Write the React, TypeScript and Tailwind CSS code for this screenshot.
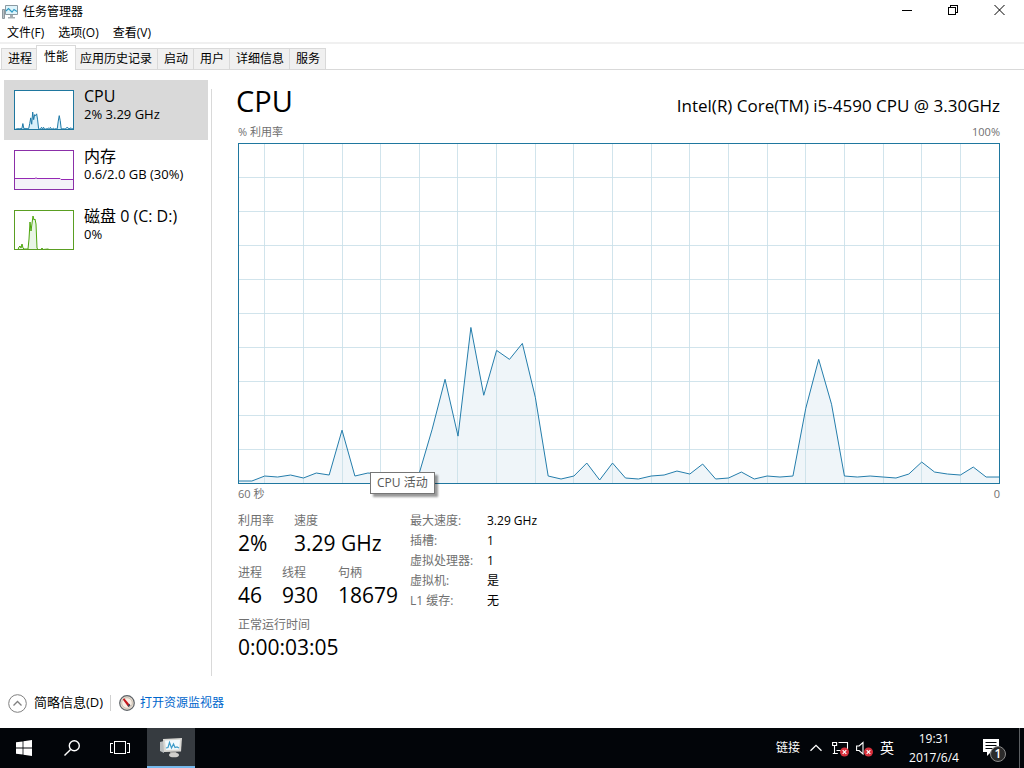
import React, { useState } from 'react';

const tabs = ['进程', '性能', '应用历史记录', '启动', '用户', '详细信息', '服务'];

// height above the baseline for every sample, out of 340
const cpuSamples = [
  2, 2, 7, 6, 8, 5, 10, 8, 53, 7, 10, 9, 9, 8, 10, 54, 104, 47, 156, 88,
  133, 124, 140, 86, 7, 4, 7, 20, 3, 20, 5, 4, 7, 8, 12, 9, 19, 4, 5, 11,
  4, 7, 6, 7, 75, 124, 79, 7, 6, 7, 6, 5, 9, 21, 11, 9, 8, 16, 6, 6,
];

const CHART_W = 762;
const CHART_H = 340;
const STEP = CHART_W / (cpuSamples.length - 1);

const cpuLine = cpuSamples
  .map((value, i) => `${(i * STEP).toFixed(1)},${CHART_H - value}`)
  .join(' ');

const CpuChart: React.FC = () => (
  <svg
    className="block w-full h-[200px] grow border border-[#1f779f] bg-white"
    viewBox={`0 0 ${CHART_W} ${CHART_H}`}
    preserveAspectRatio="none"
    role="img"
    aria-label="CPU 活动"
  >
    <polygon points={`0,340 ${cpuLine} 762,340`} fill="#eff5f9" />
    <g stroke="#c9dfe9" strokeOpacity="0.85" shapeRendering="crispEdges">
      {Array.from({ length: 9 }, (_, i) => (
        <line key={i} x1="0" x2={CHART_W} y1={(i + 1) * 34} y2={(i + 1) * 34} vectorEffect="non-scaling-stroke" />
      ))}
      {Array.from({ length: 19 }, (_, i) => (
        <line key={i} x1={(2 + i * 3) * STEP} x2={(2 + i * 3) * STEP} y1="0" y2={CHART_H} vectorEffect="non-scaling-stroke" />
      ))}
    </g>
    <polyline points={cpuLine} fill="none" stroke="#237cab" vectorEffect="non-scaling-stroke" />
  </svg>
);

const devices = [
  {
    name: 'CPU',
    detail: '2% 3.29 GHz',
    line: cpuSamples.map((value, i) => `${(i * 58) / 59},${38.5 - (value * 38) / CHART_H}`).join(' '),
    stroke: '#1f7aa8',
    fill: '#d9f0fa',
    border: 'border-[#1f779f]',
  },
  {
    name: '内存',
    detail: '0.6/2.0 GB (30%)',
    line: '0,27.5 20,27.5 21,26.8 22,27.5 45,27.5 46,28.5 58,28.5',
    stroke: '#9528b4',
    fill: '#f4f2f8',
    border: 'border-[#8b2fa8]',
  },
  {
    name: '磁盘 0 (C: D:)',
    detail: '0%',
    line: '0,38.5 3,38.5 4,36 5,35 6,37 7,33 8,37 9,38 13,38 14,28 15,11 16,20 18,5 19,9 20,8 21,13 22,37 23,38.5 26,38.5 27,37 28,38.5 33,38 34,38.5 58,38.5',
    stroke: '#4da60c',
    fill: '#e9f5e6',
    border: 'border-[#5a9e22]',
  },
];

const DeviceList: React.FC = () => {
  const [selected, setSelected] = useState('CPU');

  return (
    <aside className="w-[204px] shrink-0 pt-2.5">
      {devices.map((device) => (
        <button
          key={device.name}
          type="button"
          onClick={() => setSelected(device.name)}
          className={`flex w-full h-[60px] items-center gap-2.5 px-2.5 text-left ${selected === device.name ? 'bg-[#d9d9d9]' : ''}`}
        >
          <svg className={`w-[60px] h-10 shrink-0 border bg-white ${device.border}`} viewBox="0 0 58 38" aria-hidden="true">
            <polygon points={`0,38 ${device.line} 58,38`} fill={device.fill} />
            <polyline points={device.line} fill="none" stroke={device.stroke} />
          </svg>
          <span className="flex flex-col pb-3">
            <span className="text-base leading-5">{device.name}</span>
            <span className="text-[13px] leading-4">{device.detail}</span>
          </span>
        </button>
      ))}
    </aside>
  );
};

const Stat: React.FC<{ label: string; value: string }> = ({ label, value }) => (
  <div>
    <dt className="text-xs leading-5 text-[#707070]">{label}</dt>
    <dd className="pb-1 text-[21px] leading-6">{value}</dd>
  </div>
);

const details = [
  ['最大速度:', '3.29 GHz'],
  ['插槽:', '1'],
  ['虚拟处理器:', '1'],
  ['虚拟机:', '是'],
  ['L1 缓存:', '无'],
];

const MonitorIcon: React.FC = () => (
  <svg className="w-4 h-4" viewBox="0 0 16 16" fill="none" aria-hidden="true">
    <path d="M.5 5.500h2v9h-2z" fill="#b9c0c4" stroke="#8d989e" />
    <path d="M3.500 1.500h12v9h-12z" fill="#dff5fc" stroke="#8b9aa2" />
    <path d="M4 7l2.500-2.500L10 8l2-2.500 3 2" stroke="#2f9bc4" strokeWidth="1.200" />
    <path d="M8 11h3v2H8zM6 13h7v1.500H6z" fill="#a4adb2" />
  </svg>
);

const TitleBar: React.FC = () => (
  <header>
    <div className="flex h-[22px] items-center justify-between">
      <h1 className="flex items-center gap-[5px] pl-0.5 pt-0.5 text-xs">
        <MonitorIcon />
        任务管理器
      </h1>
      <div className="flex pb-0.5">
        <button type="button" aria-label="最小化" className="flex w-[46px] h-5 items-center justify-center">
          <svg className="w-3 h-3" viewBox="0 0 12 12" stroke="#000" shapeRendering="crispEdges">
            <path d="M1 6.500h10" />
          </svg>
        </button>
        <button type="button" aria-label="还原" className="flex w-[46px] h-5 items-center justify-center">
          <svg className="w-3 h-3" viewBox="0 0 12 12" fill="none" stroke="#000" shapeRendering="crispEdges">
            <path d="M1.500 3.500h7v7h-7zM3.500 3.500v-2h7v7h-2" />
          </svg>
        </button>
        <button type="button" aria-label="关闭" className="flex w-12 h-5 items-center justify-center">
          <svg className="w-3 h-3" viewBox="0 0 12 12" stroke="#000">
            <path d="M.5 1l10 10M10.500 1l-10 10" />
          </svg>
        </button>
      </div>
    </div>
    <nav className="flex h-5 items-center gap-3.5 px-[7px] pt-0.5 text-xs">
      <button type="button">文件(F)</button>
      <button type="button">选项(O)</button>
      <button type="button">查看(V)</button>
    </nav>
  </header>
);

const TabBar: React.FC = () => {
  const [active, setActive] = useState('性能');

  return (
    <div role="tablist" className="flex h-7 items-end border-t-2 border-b border-t-[#f0f0f0] border-b-[#d9d9d9] pl-px text-xs">
      {tabs.map((tab) => (
        <button
          key={tab}
          type="button"
          role="tab"
          aria-selected={tab === active}
          onClick={() => setActive(tab)}
          className={
            tab === active
              ? 'relative z-10 h-[25px] -mb-px -mx-0.5 px-[7px] pb-0.5 border-x border-t border-[#d9d9d9] bg-white'
              : 'h-[21px] pl-1.5 pr-[5px] border-t border-r first:border-l border-[#d9d9d9] bg-[#f0f0f0]'
          }
        >
          {tab}
        </button>
      ))}
    </div>
  );
};

const Performance: React.FC = () => (
  <section className="flex grow flex-col pl-[26px] pr-6 pt-3 pb-[17px]">
    <div className="flex h-10 items-center justify-between">
      <h2 className="-ml-0.5 text-[29px] leading-9 pb-0.5">CPU</h2>
      <p className="pt-2 text-[17px]">Intel(R) Core(TM) i5-4590 CPU @ 3.30GHz</p>
    </div>
    <div className="flex justify-between text-[11px] leading-5 text-[#707070]">
      <span>% 利用率</span>
      <span>100%</span>
    </div>
    <div className="relative flex grow flex-col pt-px">
      <CpuChart />
      <div
        role="tooltip"
        className="absolute left-[132px] -bottom-2.5 border border-[#767676] bg-white px-1.5 text-xs leading-5 text-[#575757] shadow-[3px_3px_2px_rgba(0,0,0,0.4)]"
      >
        CPU 活动
      </div>
    </div>
    <div className="flex justify-between text-[11px] leading-5 text-[#707070]">
      <span>60 秒</span>
      <span>0</span>
    </div>
    <div className="flex pt-[7px]">
      <div className="flex w-[172px] flex-col gap-1">
        <dl className="grid grid-cols-[56px_1fr]">
          <Stat label="利用率" value="2%" />
          <Stat label="速度" value="3.29 GHz" />
        </dl>
        <dl className="grid grid-cols-[44px_56px_1fr]">
          <Stat label="进程" value="46" />
          <Stat label="线程" value="930" />
          <Stat label="句柄" value="18679" />
        </dl>
        <dl>
          <Stat label="正常运行时间" value="0:00:03:05" />
        </dl>
      </div>
      <dl className="text-xs leading-5">
        {details.map(([label, value]) => (
          <div key={label} className="flex">
            <dt className="w-[77px] text-[#707070]">{label}</dt>
            <dd>{value}</dd>
          </div>
        ))}
      </dl>
    </div>
  </section>
);

const Footer: React.FC = () => (
  <footer className="flex h-12 items-center px-2 pb-0.5 text-xs">
    <button type="button" className="flex items-center gap-[7px] text-[13px]">
      <svg className="w-[19px] h-[19px]" viewBox="0 0 19 19" fill="none" aria-hidden="true">
        <circle cx="9.500" cy="9.500" r="8.800" stroke="#808080" />
        <path d="M5.500 11.500l4-4 4 4" stroke="#808080" strokeWidth="1.300" />
      </svg>
      简略信息(D)
    </button>
    <span className="ml-[7px] mr-2 h-4 w-px bg-[#d0d0d0]" />
    <a href="#resmon" className="flex items-center gap-[5px] text-[#0066cc]">
      <svg className="w-4 h-4" viewBox="0 0 16 16" fill="none" aria-hidden="true">
        <circle cx="8" cy="8" r="7.300" fill="#e6ddd2" stroke="#5c6166" strokeWidth="1.200" />
        <circle cx="8" cy="8" r="5.300" fill="#f8efe6" stroke="#c3b6a7" strokeWidth=".8" />
        <path d="M3.800 4.400l1.400-1.200 6 7-1.900 1.700z" fill="#c4161c" />
        <path d="M8.500 10.700l2-1.900 1 1.700-1.700 1.500z" fill="#3d4d5c" />
      </svg>
      打开资源监视器
    </a>
  </footer>
);

const ErrorBadge: React.FC = () => (
  <>
    <circle cx="12.500" cy="12" r="4.500" fill="#d8303c" stroke="none" />
    <path d="M10.700 10.200l3.600 3.600M14.300 10.200l-3.600 3.600" stroke="#fff" strokeWidth="1.200" />
  </>
);

const Taskbar: React.FC = () => (
  <div className="flex h-10 items-stretch justify-between bg-[#020509] text-xs text-white">
    <div className="flex">
      <button type="button" aria-label="开始" className="flex w-12 items-center justify-center">
        <svg className="w-4 h-4" viewBox="0 0 16 16" fill="#fff">
          <path d="M0 2.300l6.600-.9v6.200H0zM7.400 1.300L16 0v7.600H7.400zM0 8.400h6.600v6.200L0 13.700zM7.400 8.400H16V16l-8.600-1.300z" />
        </svg>
      </button>
      <button type="button" aria-label="搜索" className="flex w-12 items-center justify-center">
        <svg className="w-4 h-4" viewBox="0 0 16 16" fill="none" stroke="#fff" strokeWidth="1.400">
          <circle cx="10.300" cy="5.700" r="5" />
          <path d="M6.600 9.400L.5 15.500" />
        </svg>
      </button>
      <button type="button" aria-label="任务视图" className="flex w-12 items-center justify-center">
        <svg className="w-5 h-4" viewBox="0 0 20 16" fill="none" stroke="#fff" shapeRendering="crispEdges">
          <path d="M4.500 1.500h11v12h-11zM3 3.500H.5v9H3M17 3.500h2.500v9H17" />
        </svg>
      </button>
      <button type="button" aria-label="任务管理器" className="ml-[3px] flex w-12 items-center justify-center border-b-2 border-[#76b9ed] bg-[#363b40]">
        <svg className="w-6 h-6" viewBox="0 0 24 24">
          <path d="M1 7l4-1v12l-4-2z" fill="#b8bcbe" />
          <path d="M4 4L23 3l-1 13.500-17 .5z" fill="#d9d8d4" />
          <path d="M6 5.500l15-.8-.8 9.800L7 15z" fill="#f3fafd" />
          <path d="M7 13l2-.5 1.500-5 2 5.500 2-4 1.500 3.500 2-.5 2 1" fill="none" stroke="#3e9cc9" strokeWidth="1.200" />
          <path d="M11 17l6-.5 1 3h-6z" fill="#aaa9a5" />
          <ellipse cx="15" cy="20" rx="5" ry="2.300" fill="#cfcecb" />
        </svg>
      </button>
    </div>
    <div className="flex items-center">
      <span>链接</span>
      <button type="button" aria-label="显示隐藏的图标" className="ml-2.5">
        <svg className="w-3 h-3" viewBox="0 0 12 12" fill="none" stroke="#fff" strokeWidth="1.300">
          <path d="M.5 8.800L6 3.300l5.500 5.500" />
        </svg>
      </button>
      <button type="button" aria-label="网络" className="ml-2.5">
        <svg className="w-[18px] h-[17px]" viewBox="0 0 18 17" fill="none" stroke="#fff" strokeWidth="1.100">
          <path d="M.6 2.500h4v3h-4zM2.500 5.500v8M.8 13.500h5M6.500 2.500h9v7M4.500 10.500h5" />
          <ErrorBadge />
        </svg>
      </button>
      <button type="button" aria-label="音量" className="ml-1.5">
        <svg className="w-[18px] h-[17px]" viewBox="0 0 18 17" fill="none" stroke="#fff" strokeWidth="1.100">
          <path d="M.6 6h2.500L7 2.500v11.500L3.100 10.500H.6z" />
          <ErrorBadge />
        </svg>
      </button>
      <button type="button" className="ml-1.5 text-sm">英</button>
      <button type="button" className="ml-3 w-14 whitespace-nowrap text-center leading-[19px]">
        19:31
        <br />
        2017/6/4
      </button>
      <button type="button" aria-label="操作中心" className="relative ml-5 mr-[13px] w-6 h-6">
        <svg className="w-6 h-6" viewBox="0 0 24 24">
          <path d="M1 3h16v13h-8l-4 4v-4H1z" fill="#fff" />
          <path d="M3.500 6.500h11M3.500 9.500h11M3.500 12.500h7" stroke="#020509" strokeWidth="1.200" />
        </svg>
        <span className="absolute left-2 top-2.5 flex h-4 w-4 items-center justify-center rounded-full border border-[#8a8a8a] bg-[#2b2b2b] text-xs font-semibold">
          1
        </span>
      </button>
      <span className="h-full w-[5px] border-l border-[#5c6063]" />
    </div>
  </div>
);

const App: React.FC = () => {
  return (
    <div className="flex min-h-screen flex-col bg-white text-black font-['Open_Sans','Noto_Sans_CJK_SC',sans-serif]">
      <TitleBar />
      <TabBar />
      <main className="flex grow pl-1">
        <DeviceList />
        <div className="ml-[3px] mt-[19px] mb-1 w-px bg-[#d9d9d9]" />
        <Performance />
      </main>
      <Footer />
      <Taskbar />
    </div>
  );
};

export default App;
